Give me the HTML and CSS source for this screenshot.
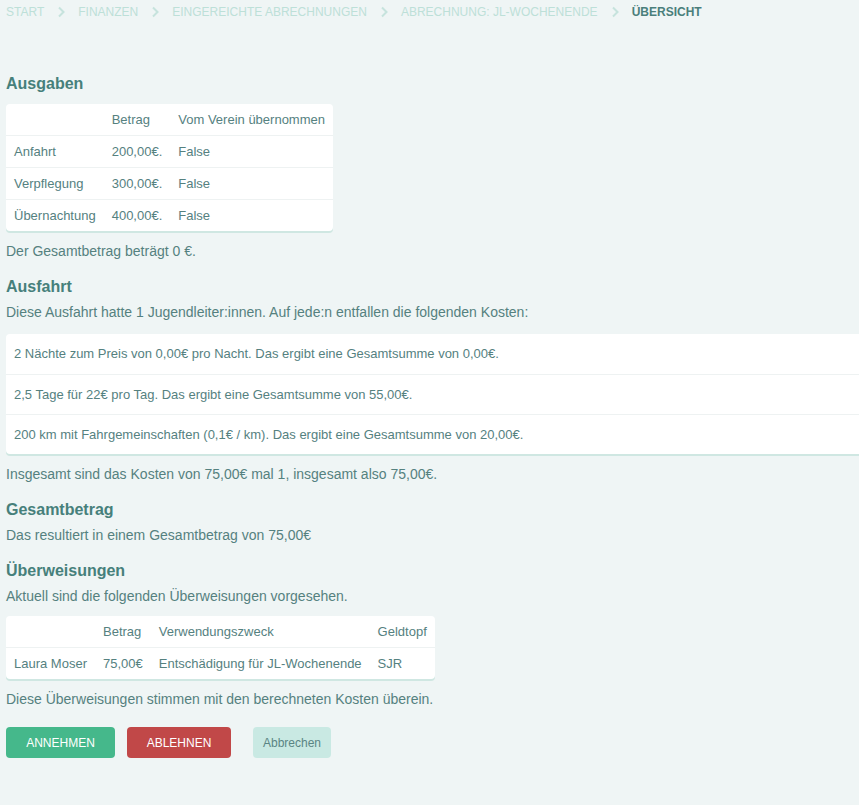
FILE: index.html
```html
<!DOCTYPE html>
<html lang="de">
<head>
  <meta charset="UTF-8">
  <title>Übersicht</title>
  <link rel="stylesheet" href="styles.css">
</head>
<body>
  <!-- Breadcrumb -->
  <nav class="breadcrumb">
    <span class="crumb">Start</span>
    <svg class="sep" width="8" height="12" viewBox="0 0 8 12"><path d="M2 1.5 L6.5 6 L2 10.5" fill="none" stroke="currentColor" stroke-width="2"/></svg>
    <span class="crumb">Finanzen</span>
    <svg class="sep" width="8" height="12" viewBox="0 0 8 12"><path d="M2 1.5 L6.5 6 L2 10.5" fill="none" stroke="currentColor" stroke-width="2"/></svg>
    <span class="crumb">Eingereichte Abrechnungen</span>
    <svg class="sep" width="8" height="12" viewBox="0 0 8 12"><path d="M2 1.5 L6.5 6 L2 10.5" fill="none" stroke="currentColor" stroke-width="2"/></svg>
    <span class="crumb">Abrechnung: JL-Wochenende</span>
    <svg class="sep" width="8" height="12" viewBox="0 0 8 12"><path d="M2 1.5 L6.5 6 L2 10.5" fill="none" stroke="currentColor" stroke-width="2"/></svg>
    <span class="crumb current">Übersicht</span>
  </nav>

  <h2 class="first">Ausgaben</h2>
  <table class="card-table">
    <thead>
      <tr><th></th><th>Betrag</th><th>Vom Verein übernommen</th></tr>
    </thead>
    <tbody>
      <tr><td>Anfahrt</td><td>200,00€.</td><td>False</td></tr>
      <tr><td>Verpflegung</td><td>300,00€.</td><td>False</td></tr>
      <tr><td>Übernachtung</td><td>400,00€.</td><td>False</td></tr>
    </tbody>
  </table>
  <p class="after-box">Der Gesamtbetrag beträgt 0 €.</p>

  <h2>Ausfahrt</h2>
  <p>Diese Ausfahrt hatte 1 Jugendleiter:innen. Auf jede:n entfallen die folgenden Kosten:</p>
  <ul class="cost-list">
    <li>2 Nächte zum Preis von 0,00€ pro Nacht. Das ergibt eine Gesamtsumme von 0,00€.</li>
    <li>2,5 Tage für 22€ pro Tag. Das ergibt eine Gesamtsumme von 55,00€.</li>
    <li>200 km mit Fahrgemeinschaften (0,1€ / km). Das ergibt eine Gesamtsumme von 20,00€.</li>
  </ul>
  <p class="after-box">Insgesamt sind das Kosten von 75,00€ mal 1, insgesamt also 75,00€.</p>

  <h2>Gesamtbetrag</h2>
  <p>Das resultiert in einem Gesamtbetrag von 75,00€</p>

  <h2>Überweisungen</h2>
  <p>Aktuell sind die folgenden Überweisungen vorgesehen.</p>
  <table class="card-table">
    <thead>
      <tr><th></th><th>Betrag</th><th>Verwendungszweck</th><th>Geldtopf</th></tr>
    </thead>
    <tbody>
      <tr><td>Laura Moser</td><td>75,00€</td><td>Entschädigung für JL-Wochenende</td><td>SJR</td></tr>
    </tbody>
  </table>
  <p class="after-box">Diese Überweisungen stimmen mit den berechneten Kosten überein.</p>

  <div class="actions">
    <button class="btn btn-accept">Annehmen</button>
    <button class="btn btn-reject">Ablehnen</button>
    <button class="btn btn-cancel">Abbrechen</button>
  </div>
</body>
</html>
```

FILE: styles.css
```css
body {
  margin: 0;
  padding: 0 6px 40px;
  background-color: #eff5f5;
  font-family: "Liberation Sans", Arial, sans-serif;
  font-size: 14px;
  color: #55817f;
}

.breadcrumb {
  display: flex;
  align-items: center;
  padding-top: 4px;
  height: 16px;
  font-size: 12px;
  text-transform: uppercase;
  color: #bde0d8;
}

.breadcrumb .sep {
  margin: 0 13px 0 13px;
  color: #c6e3dd;
}

.breadcrumb .current {
  font-weight: bold;
  color: #4a7f7b;
}

h2 {
  margin: 17px 0 0;
  font-size: 16px;
  line-height: 19px;
  color: #46807b;
}

h2.first {
  margin-top: 54px;
}

p {
  margin: 8px 0 0;
  line-height: 17px;
}

p.after-box {
  margin-top: 12px;
}

.card-table {
  margin-top: 11px;
  border-collapse: collapse;
  background-color: #fff;
  border-radius: 4px;
  box-shadow: 0 2px 0 #cfe7e2;
  font-size: 13px;
}

.card-table th,
.card-table td {
  padding: 0 8px;
  text-align: left;
  font-weight: normal;
  white-space: nowrap;
}

.card-table th {
  height: 31px;
}

.card-table td {
  height: 31px;
  border-top: 1px solid #eef2f2;
}

.cost-list {
  list-style: none;
  margin: 13px -6px 0 0;
  padding: 0;
  background-color: #fff;
  border-radius: 4px 0 0 4px;
  box-shadow: 0 2px 0 #cfe7e2;
  font-size: 13px;
}

.cost-list li {
  height: 40px;
  line-height: 40px;
  padding: 0 8px;
}

.cost-list li + li {
  height: 39px;
  line-height: 39px;
  border-top: 1px solid #eef2f2;
}

.actions {
  display: flex;
  margin-top: 19px;
}

.btn {
  height: 31px;
  border: none;
  border-radius: 4px;
  font-family: "Liberation Sans", Arial, sans-serif;
  font-size: 12px;
  cursor: pointer;
}

.btn-accept {
  width: 109px;
  background-color: #45b88b;
  color: #fff;
  text-transform: uppercase;
}

.btn-reject {
  width: 104px;
  margin-left: 12px;
  background-color: #c14848;
  color: #fff;
  text-transform: uppercase;
}

.btn-cancel {
  width: 78px;
  margin-left: 22px;
  background-color: #c9e9e3;
  color: #5a8583;
}
```
